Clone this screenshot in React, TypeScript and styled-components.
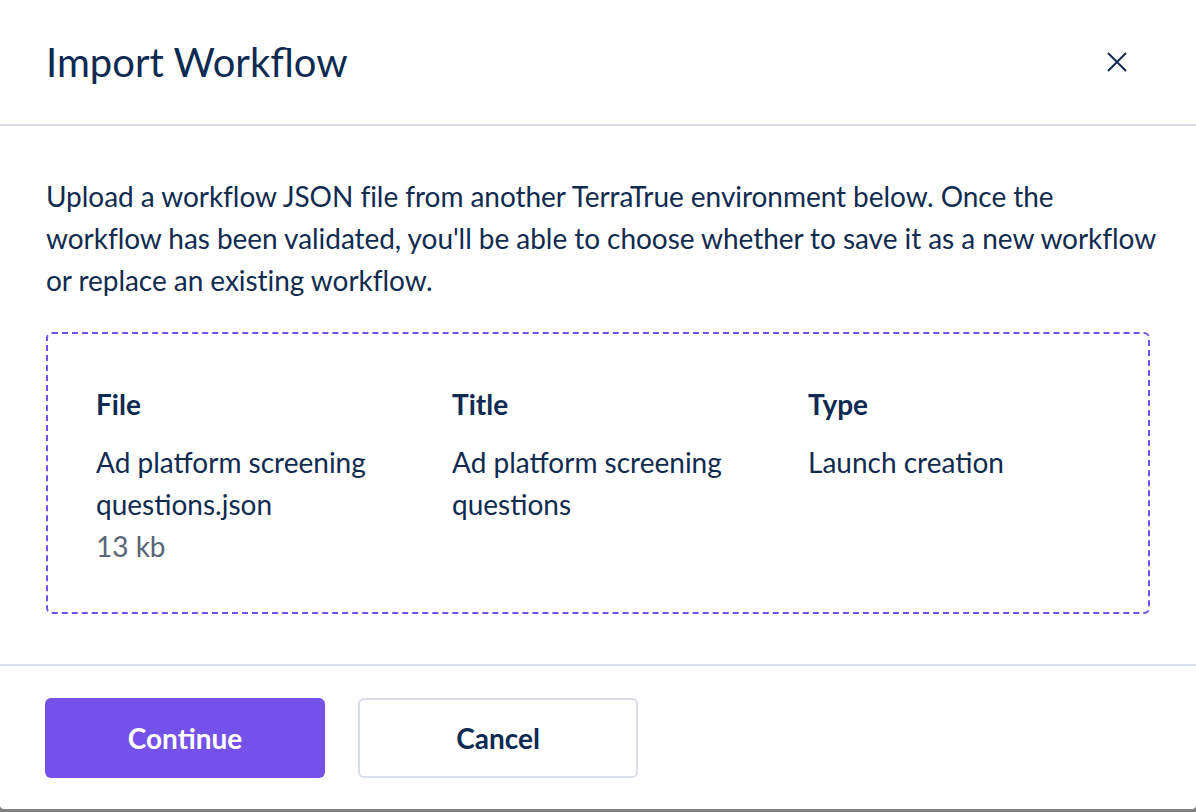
import styled, { createGlobalStyle } from 'styled-components';

const GlobalStyle = createGlobalStyle`
  html, body {
    margin: 0;
    padding: 0;
    background: #808080;
  }
  body {
    font-family: Lato, "Liberation Sans", sans-serif;
    color: #102b50;
  }
`;

const Modal = styled.div`
  height: 809px;
  background: #ffffff;
  border-radius: 0 0 4px 4px;
  display: flex;
  flex-direction: column;
`;

const Header = styled.header`
  flex-shrink: 0;
  height: 124px;
  padding: 0 69px 0 46px;
  display: flex;
  align-items: center;
  justify-content: space-between;
  border-bottom: 2px solid #d9dce9;
`;

const Title = styled.h1`
  margin: 0;
  font-size: 40px;
  font-weight: 400;
  color: #0d2a52;
`;

const CloseButton = styled.button`
  width: 20px;
  height: 20px;
  padding: 0;
  border: none;
  background: none;
  display: flex;
  cursor: pointer;
`;

const Body = styled.section`
  flex-shrink: 0;
  padding: 49px 46px 50px;
`;

const Intro = styled.p`
  margin: 0 -16px 31px 0;
  font-size: 28px;
  line-height: 42px;
  letter-spacing: -0.05px;
  color: #102b50;
`;

const DropZone = styled.div`
  border: 2px dashed #7351ea;
  border-radius: 6px;
  padding: 49px 8px 45px 48px;
  display: grid;
  grid-template-columns: repeat(3, 332px);
  column-gap: 24px;
`;

const Column = styled.div`
  display: flex;
  flex-direction: column;
`;

const Label = styled.div`
  font-size: 28px;
  line-height: 42px;
  font-weight: 700;
  color: #0d2a52;
  margin-bottom: 16px;
`;

const Value = styled.div<{ $muted?: boolean }>`
  font-size: 28px;
  line-height: 42px;
  color: ${(p) => (p.$muted ? '#5a6577' : '#102b50')};
`;

const Footer = styled.footer`
  border-top: 2px solid #d9dce9;
  padding: 32px 45px 0;
  display: flex;
  gap: 33px;
`;

const Button = styled.button<{ $primary?: boolean }>`
  width: 280px;
  height: 80px;
  border-radius: 6px;
  font-family: Lato, "Liberation Sans", sans-serif;
  font-size: 28px;
  font-weight: 700;
  cursor: pointer;
  background: ${(p) => (p.$primary ? '#7452ea' : '#ffffff')};
  color: ${(p) => (p.$primary ? '#ffffff' : '#0d2a52')};
  border: ${(p) => (p.$primary ? 'none' : '2px solid #d9dce9')};
`;

function App() {
  return (
    <>
      <GlobalStyle />
      <Modal>
        <Header>
          <Title>Import Workflow</Title>
          <CloseButton aria-label="Close">
            <svg width="20" height="20" viewBox="0 0 20 20">
              <path d="M1 1L19 19M19 1L1 19" stroke="#0d2a52" strokeWidth="2" />
            </svg>
          </CloseButton>
        </Header>
        <Body>
          <Intro>
            Upload a workflow JSON file from another TerraTrue environment below. Once the
            workflow has been validated, you'll be able to choose whether to save it as a new
            workflow or replace an existing workflow.
          </Intro>
          <DropZone>
            <Column>
              <Label>File</Label>
              <Value>Ad platform screening questions.json</Value>
              <Value $muted>13 kb</Value>
            </Column>
            <Column>
              <Label>Title</Label>
              <Value>Ad platform screening questions</Value>
            </Column>
            <Column>
              <Label>Type</Label>
              <Value>Launch creation</Value>
            </Column>
          </DropZone>
        </Body>
        <Footer>
          <Button $primary>Continue</Button>
          <Button>Cancel</Button>
        </Footer>
      </Modal>
    </>
  );
}

export default App;
